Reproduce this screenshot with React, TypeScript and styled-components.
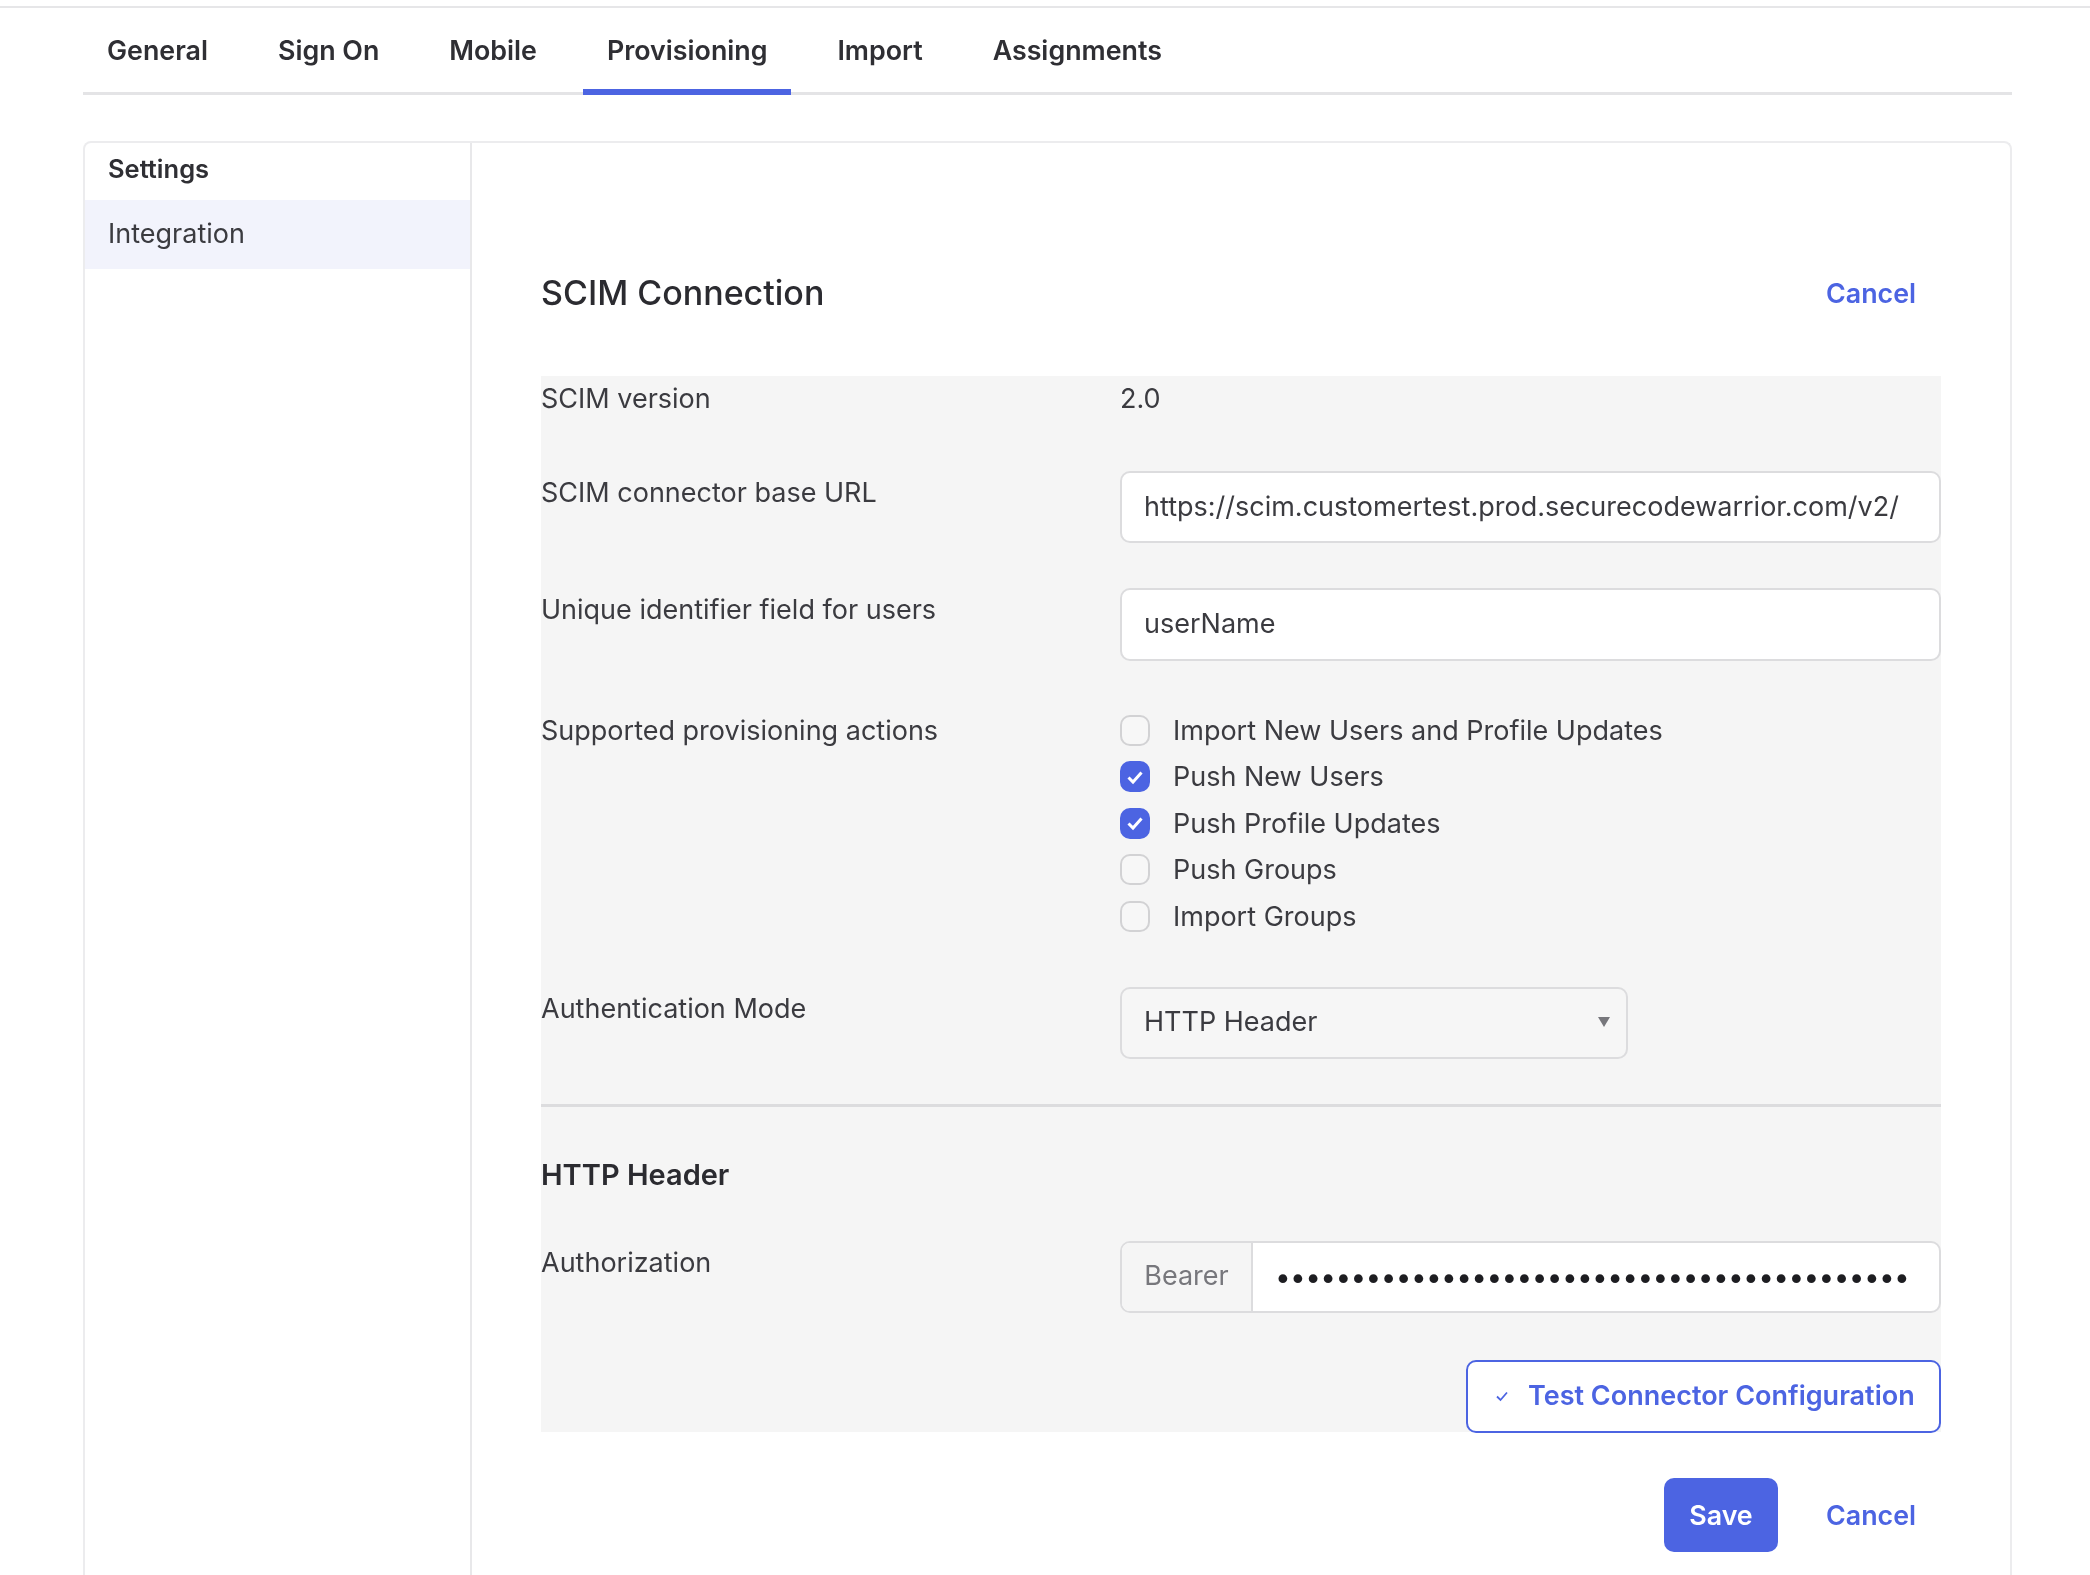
import { FC } from "react";
import styled, { createGlobalStyle } from "styled-components";

const GlobalStyle = createGlobalStyle`
  html, body {
    margin: 0;
    background: #ffffff;
  }
  body {
    font-family: Inter, "Liberation Sans", sans-serif;
    color: #3b3b40;
  }
`;

const tabs = ["General", "Sign On", "Mobile", "Provisioning", "Import", "Assignments"];

const actions = [
  { label: "Import New Users and Profile Updates", checked: false },
  { label: "Push New Users", checked: true },
  { label: "Push Profile Updates", checked: true },
  { label: "Push Groups", checked: false },
  { label: "Import Groups", checked: false },
];

const App: FC = () => {
  return (
    <>
      <GlobalStyle />
      <StyledPage>
        <StyledTabs>
          {tabs.map((tab) => (
            <StyledTab key={tab} $active={tab === "Provisioning"}>
              {tab}
            </StyledTab>
          ))}
        </StyledTabs>
        <StyledPanel>
          <StyledSidebar>
            <StyledSidebarTitle>Settings</StyledSidebarTitle>
            <StyledSidebarItem>Integration</StyledSidebarItem>
          </StyledSidebar>
          <StyledContent>
            <StyledHeader>
              <StyledTitle>SCIM Connection</StyledTitle>
              <StyledLink>Cancel</StyledLink>
            </StyledHeader>
            <StyledForm>
              <StyledVersionRow>
                <span>SCIM version</span>
                <span>2.0</span>
              </StyledVersionRow>
              <StyledRow $gap={45}>
                <StyledLabel>SCIM connector base URL</StyledLabel>
                <StyledInput>https://scim.customertest.prod.securecodewarrior.com/v2/</StyledInput>
              </StyledRow>
              <StyledRow $gap={48}>
                <StyledLabel>Unique identifier field for users</StyledLabel>
                <StyledInput $tall>userName</StyledInput>
              </StyledRow>
              <StyledRow $gap={56}>
                <StyledLabel>Supported provisioning actions</StyledLabel>
                <StyledActions>
                  {actions.map((action) => (
                    <StyledAction key={action.label}>
                      <StyledCheckbox $checked={action.checked}>
                        {action.checked && (
                          <svg width="22" height="22" viewBox="0 0 22 22" fill="none">
                            <path d="M4.5 11.5 9 16 17.5 6.5" stroke="#fff" strokeWidth="3" />
                          </svg>
                        )}
                      </StyledCheckbox>
                      {action.label}
                    </StyledAction>
                  ))}
                </StyledActions>
              </StyledRow>
              <StyledRow $gap={45}>
                <StyledLabel>Authentication Mode</StyledLabel>
                <StyledSelect>
                  HTTP Header
                  <svg width="12" height="10" viewBox="0 0 12 10">
                    <path d="M0 0h12L6 10z" fill="#77777c" />
                  </svg>
                </StyledSelect>
              </StyledRow>
              <StyledDivider />
              <StyledSubtitle>HTTP Header</StyledSubtitle>
              <StyledRow $gap={47}>
                <StyledLabel>Authorization</StyledLabel>
                <StyledInputGroup>
                  <StyledAddon>Bearer</StyledAddon>
                  <StyledDots>{"•".repeat(42)}</StyledDots>
                </StyledInputGroup>
              </StyledRow>
              <StyledTestRow>
                <StyledTestButton>
                  <svg width="16" height="16" viewBox="0 0 16 16" fill="none">
                    <path d="M3 8.5 6.5 12 13 4.5" stroke="#4c64e2" strokeWidth="1.8" />
                  </svg>
                  Test Connector Configuration
                </StyledTestButton>
              </StyledTestRow>
            </StyledForm>
            <StyledFooter>
              <StyledSave>Save</StyledSave>
              <StyledLink>Cancel</StyledLink>
            </StyledFooter>
          </StyledContent>
        </StyledPanel>
      </StyledPage>
    </>
  );
};

export default App;

const StyledPage = styled.div`
  display: flex;
  flex-direction: column;
  height: 1575px;
  padding-top: 6px;
  box-sizing: border-box;
  overflow: hidden;
  background: linear-gradient(#e6e6e8, #e6e6e8) top 6px left / 100% 2px no-repeat;
  font-size: 27px;
  line-height: 1;
  filter: blur(0.6px);
`;

const StyledTabs = styled.div`
  display: flex;
  gap: 22px;
  height: 86px;
  margin: 0 78px 0 83px;
  border-bottom: 3px solid #e4e4e6;
`;

const StyledTab = styled.div<{ $active?: boolean }>`
  display: flex;
  align-items: center;
  height: 89px;
  padding: 6px 24px 0;
  box-sizing: border-box;
  font-weight: 600;
  font-size: 26.8px;
  color: #2f2f34;
  border-bottom: 6px solid ${({ $active }) => ($active ? "#4c64e2" : "transparent")};
`;

const StyledPanel = styled.div`
  display: flex;
  flex: 1;
  margin: 46px 78px 0 83px;
  border: 2px solid #ececee;
  border-bottom: 0;
  border-radius: 8px 8px 0 0;
`;

const StyledSidebar = styled.div`
  width: 385px;
  flex-shrink: 0;
  border-right: 2px solid #e8e8ea;
`;

const StyledSidebarTitle = styled.div`
  display: flex;
  align-items: center;
  height: 57px;
  padding: 0 0 5px 23px;
  box-sizing: border-box;
  font-weight: 600;
  font-size: 25.5px;
  color: #2f2f34;
`;

const StyledSidebarItem = styled.div`
  display: flex;
  align-items: center;
  height: 69px;
  padding: 0 0 3px 23px;
  box-sizing: border-box;
  background: #f2f3fc;
`;

const StyledContent = styled.div`
  flex: 1;
  min-width: 0;
  display: flex;
  flex-direction: column;
  padding: 0 69px;
`;

const StyledHeader = styled.div`
  display: flex;
  justify-content: space-between;
  align-items: center;
  height: 233px;
  padding: 67px 25px 0 0;
  box-sizing: border-box;
`;

const StyledTitle = styled.h2`
  margin: 0;
  font-size: 34px;
  font-weight: 500;
  color: #2b2b30;
`;

const StyledLink = styled.span`
  font-weight: 600;
  font-size: 26.8px;
  color: #4c64e2;
`;

const StyledForm = styled.div`
  display: flex;
  flex-direction: column;
  background: #f5f5f5;
`;

const StyledVersionRow = styled.div`
  display: grid;
  grid-template-columns: 579px minmax(0, 1fr);
  padding-top: 9px;
  height: 95px;
  box-sizing: border-box;
`;

const StyledRow = styled.div<{ $gap: number }>`
  display: grid;
  grid-template-columns: 579px minmax(0, 1fr);
  align-items: start;
  margin-bottom: ${({ $gap }) => $gap}px;
`;

const StyledLabel = styled.span`
  padding-top: 8px;
`;

const StyledInput = styled.div<{ $tall?: boolean }>`
  display: flex;
  align-items: center;
  height: ${({ $tall }) => ($tall ? 73 : 72)}px;
  padding: 0 22px 2px;
  box-sizing: border-box;
  background: #ffffff;
  border: 2px solid #dcdcde;
  border-radius: 10px;
  white-space: nowrap;
`;

const StyledActions = styled.div`
  display: flex;
  flex-direction: column;
  gap: 16.5px;
  margin-top: 6px;
`;

const StyledAction = styled.label`
  display: flex;
  align-items: center;
  gap: 23px;
  height: 30px;
`;

const StyledCheckbox = styled.span<{ $checked: boolean }>`
  display: flex;
  align-items: center;
  justify-content: center;
  width: 30px;
  height: 31px;
  box-sizing: border-box;
  border-radius: 10px;
  background: ${({ $checked }) => ($checked ? "#4c64e2" : "#f7f7f7")};
  border: 2px solid ${({ $checked }) => ($checked ? "#4c64e2" : "#d2d2d4")};
`;

const StyledSelect = styled.div`
  display: flex;
  align-items: center;
  justify-content: space-between;
  width: 508px;
  height: 72px;
  padding: 0 16px 3px 22px;
  box-sizing: border-box;
  border: 2px solid #dcdcde;
  border-radius: 10px;
  background: #f6f6f6;
`;

const StyledDivider = styled.div`
  height: 3px;
  background: #dcdcde;
`;

const StyledSubtitle = styled.h3`
  margin: 53px 0 52px;
  font-size: 29px;
  font-weight: 600;
  color: #2b2b30;
`;

const StyledInputGroup = styled.div`
  display: flex;
  height: 72px;
  box-sizing: border-box;
  background: #ffffff;
  border: 2px solid #dcdcde;
  border-radius: 10px;
  overflow: hidden;
`;

const StyledAddon = styled.span`
  display: flex;
  align-items: center;
  justify-content: center;
  flex-shrink: 0;
  width: 131px;
  padding-bottom: 4px;
  box-sizing: border-box;
  color: #77777c;
  background: #f5f5f5;
  border-right: 2px solid #dcdcde;
`;

const StyledDots = styled.span`
  display: flex;
  align-items: center;
  padding-left: 22px;
  letter-spacing: -0.65px;
  font-size: 28px;
  color: #1d1d21;
  white-space: nowrap;
`;

const StyledTestRow = styled.div`
  display: flex;
  justify-content: flex-end;
`;

const StyledTestButton = styled.div`
  display: flex;
  align-items: center;
  gap: 18px;
  width: 475px;
  height: 73px;
  margin-bottom: -1px;
  padding: 0 0 2px 26px;
  box-sizing: border-box;
  font-weight: 600;
  font-size: 27px;
  color: #4c64e2;
  background: #ffffff;
  border: 2px solid #4c64e2;
  border-radius: 10px;
`;

const StyledFooter = styled.div`
  display: flex;
  justify-content: flex-end;
  align-items: center;
  gap: 48px;
  margin-top: 46px;
  padding-right: 25px;
`;

const StyledSave = styled.div`
  display: flex;
  align-items: center;
  justify-content: center;
  width: 114px;
  height: 74px;
  font-weight: 600;
  font-size: 26.8px;
  color: #ffffff;
  background: #4c64e2;
  border-radius: 10px;
`;
